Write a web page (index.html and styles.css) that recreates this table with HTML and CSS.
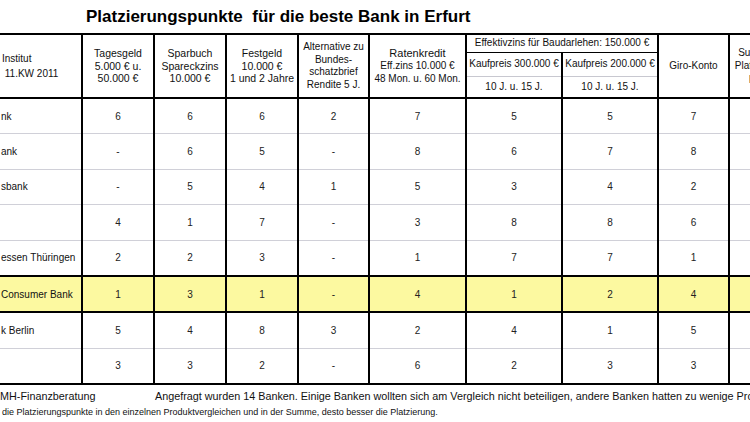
FILE: index.html
```html
<!DOCTYPE html>
<html lang="de">
<head>
<meta charset="utf-8">
<title>Platzierungspunkte</title>
<link rel="stylesheet" href="styles.css">
</head>
<body>
<div class="page">
  <h1 class="title">Platzierungspunkte&nbsp; für die beste Bank in Erfurt</h1>
  <table class="grid">
    <colgroup>
      <col class="c-inst"><col class="c72"><col class="c72"><col class="c72"><col class="c71">
      <col class="c97"><col class="c96"><col class="c96"><col class="c71"><col class="c70">
    </colgroup>
    <thead>
      <tr class="h1">
        <th rowspan="3" class="inst">Institut<br>&nbsp;11.KW 2011</th>
        <th rowspan="3" class="wide">Tagesgeld<br>5.000 € u.<br>50.000 €</th>
        <th rowspan="3" class="wide">Sparbuch<br>Spareckzins<br>10.000 €</th>
        <th rowspan="3" class="wide">Festgeld<br>10.000 €<br>1 und 2 Jahre</th>
        <th rowspan="3">Alternative zu<br>Bundes-<br>schatzbrief<br>Rendite 5 J.</th>
        <th rowspan="3"><span class="big">Ratenkredit</span><br>Eff.zins 10.000 €<br>48 Mon. u. 60 Mon.</th>
        <th colspan="2" class="group">Effektivzins für Baudarlehen: 150.000 €</th>
        <th rowspan="3">Giro-Konto</th>
        <th rowspan="3">Summe der<br>Platzierungs-<br>punkte</th>
      </tr>
      <tr class="h2">
        <th class="kp">Kaufpreis 300.000 €</th>
        <th class="kp">Kaufpreis 200.000 €</th>
      </tr>
      <tr class="h3">
        <th>10 J. u. 15 J.</th>
        <th>10 J. u. 15 J.</th>
      </tr>
    </thead>
    <tbody>
      <tr><td class="name">nk</td><td>6</td><td>6</td><td>6</td><td>2</td><td>7</td><td>5</td><td>5</td><td>7</td><td></td></tr>
      <tr><td class="name">ank</td><td>-</td><td>6</td><td>5</td><td>-</td><td>8</td><td>6</td><td>7</td><td>8</td><td></td></tr>
      <tr><td class="name">sbank</td><td>-</td><td>5</td><td>4</td><td>1</td><td>5</td><td>3</td><td>4</td><td>2</td><td></td></tr>
      <tr><td class="name"></td><td>4</td><td>1</td><td>7</td><td>-</td><td>3</td><td>8</td><td>8</td><td>6</td><td></td></tr>
      <tr><td class="name">essen Thüringen</td><td>2</td><td>2</td><td>3</td><td>-</td><td>1</td><td>7</td><td>7</td><td>1</td><td></td></tr>
      <tr class="hl"><td class="name">Consumer Bank</td><td>1</td><td>3</td><td>1</td><td>-</td><td>4</td><td>1</td><td>2</td><td>4</td><td></td></tr>
      <tr><td class="name">k Berlin</td><td>5</td><td>4</td><td>8</td><td>3</td><td>2</td><td>4</td><td>1</td><td>5</td><td></td></tr>
      <tr class="last"><td class="name"></td><td>3</td><td>3</td><td>2</td><td>-</td><td>6</td><td>2</td><td>3</td><td>3</td><td></td></tr>
    </tbody>
  </table>
  <div class="foot1">
    <span class="src">MH-Finanzberatung</span>
    <span class="note">Angefragt wurden 14 Banken. Einige Banken wollten sich am Vergleich nicht beteiligen, andere Banken hatten zu wenige Produkte im Angebot.</span>
  </div>
  <div class="foot2">die Platzierungspunkte in den einzelnen Produktvergleichen und in der Summe, desto besser die Platzierung.</div>
</div>
</body>
</html>
```

FILE: styles.css
```css
html, body {
  margin: 0;
  padding: 0;
  background: #ffffff;
  overflow: hidden;
}
body {
  width: 750px;
  height: 422px;
  font-family: "Liberation Sans", Arial, sans-serif;
  color: #111;
}
.page {
  width: 820px;
}
.title {
  margin: 0;
  height: 33px;
  line-height: 33px;
  padding-left: 86px;
  font-size: 17px;
  font-weight: bold;
  color: #000;
  white-space: nowrap;
}
.grid {
  border-collapse: collapse;
  table-layout: fixed;
  width: 799px;
  font-size: 10px;
}
.c-inst { width: 82px; }
.c72 { width: 72px; }
.c71 { width: 71px; }
.c97 { width: 97px; }
.c96 { width: 96px; }
.c70 { width: 70px; }

.grid th {
  font-weight: normal;
  text-align: center;
  vertical-align: middle;
  line-height: 12.5px;
  padding: 0;
  border-left: 2px solid #000;
  border-right: 2px solid #000;
  border-top: 2px solid #000;
  border-bottom: 2px solid #000;
  white-space: nowrap;
  overflow: hidden;
}
.grid th.wide {
  font-size: 10.5px;
}
.grid th.inst {
  border-left: none;
  text-align: left;
  padding-left: 2px;
  line-height: 15px;
}
.grid .big {
  font-size: 11px;
}
.grid tr.h1 { height: 18px; }
.grid tr.h2 { height: 24px; }
.grid tr.h3 { height: 22px; }
.grid th.group {
  border-bottom: 1px solid #000;
}
.grid th.kp {
  border-top: 1px solid #000;
  border-bottom: 1px solid #c8c8d0;
}
.grid tr.h3 th {
  border-top: 1px solid #c8c8d0;
}

.grid td {
  height: 34.4px;
  padding: 0;
  text-align: center;
  vertical-align: middle;
  border-left: 2px solid #000;
  border-right: 2px solid #000;
  border-bottom: 1px solid #d0d0d8;
  color: #222;
  white-space: nowrap;
  overflow: hidden;
}
.grid td.name {
  border-left: none;
  text-align: left;
  padding-left: 1px;
  color: #111;
}
.grid tr.hl td {
  background: #fcf9a0;
  border-top: 2px solid #000;
  border-bottom: 2px solid #000;
}
.grid tr.last td {
  border-bottom: 2px solid #000;
}

.foot1 {
  display: flex;
  height: 19px;
  align-items: center;
  font-size: 10.8px;
  white-space: nowrap;
  color: #111;
  padding-top: 1px;
}
.foot1 .src {
  width: 155px;
  flex: none;
}
.foot2 {
  font-size: 9px;
  padding-left: 2px;
  white-space: nowrap;
  line-height: 14px;
  color: #111;
}
```
